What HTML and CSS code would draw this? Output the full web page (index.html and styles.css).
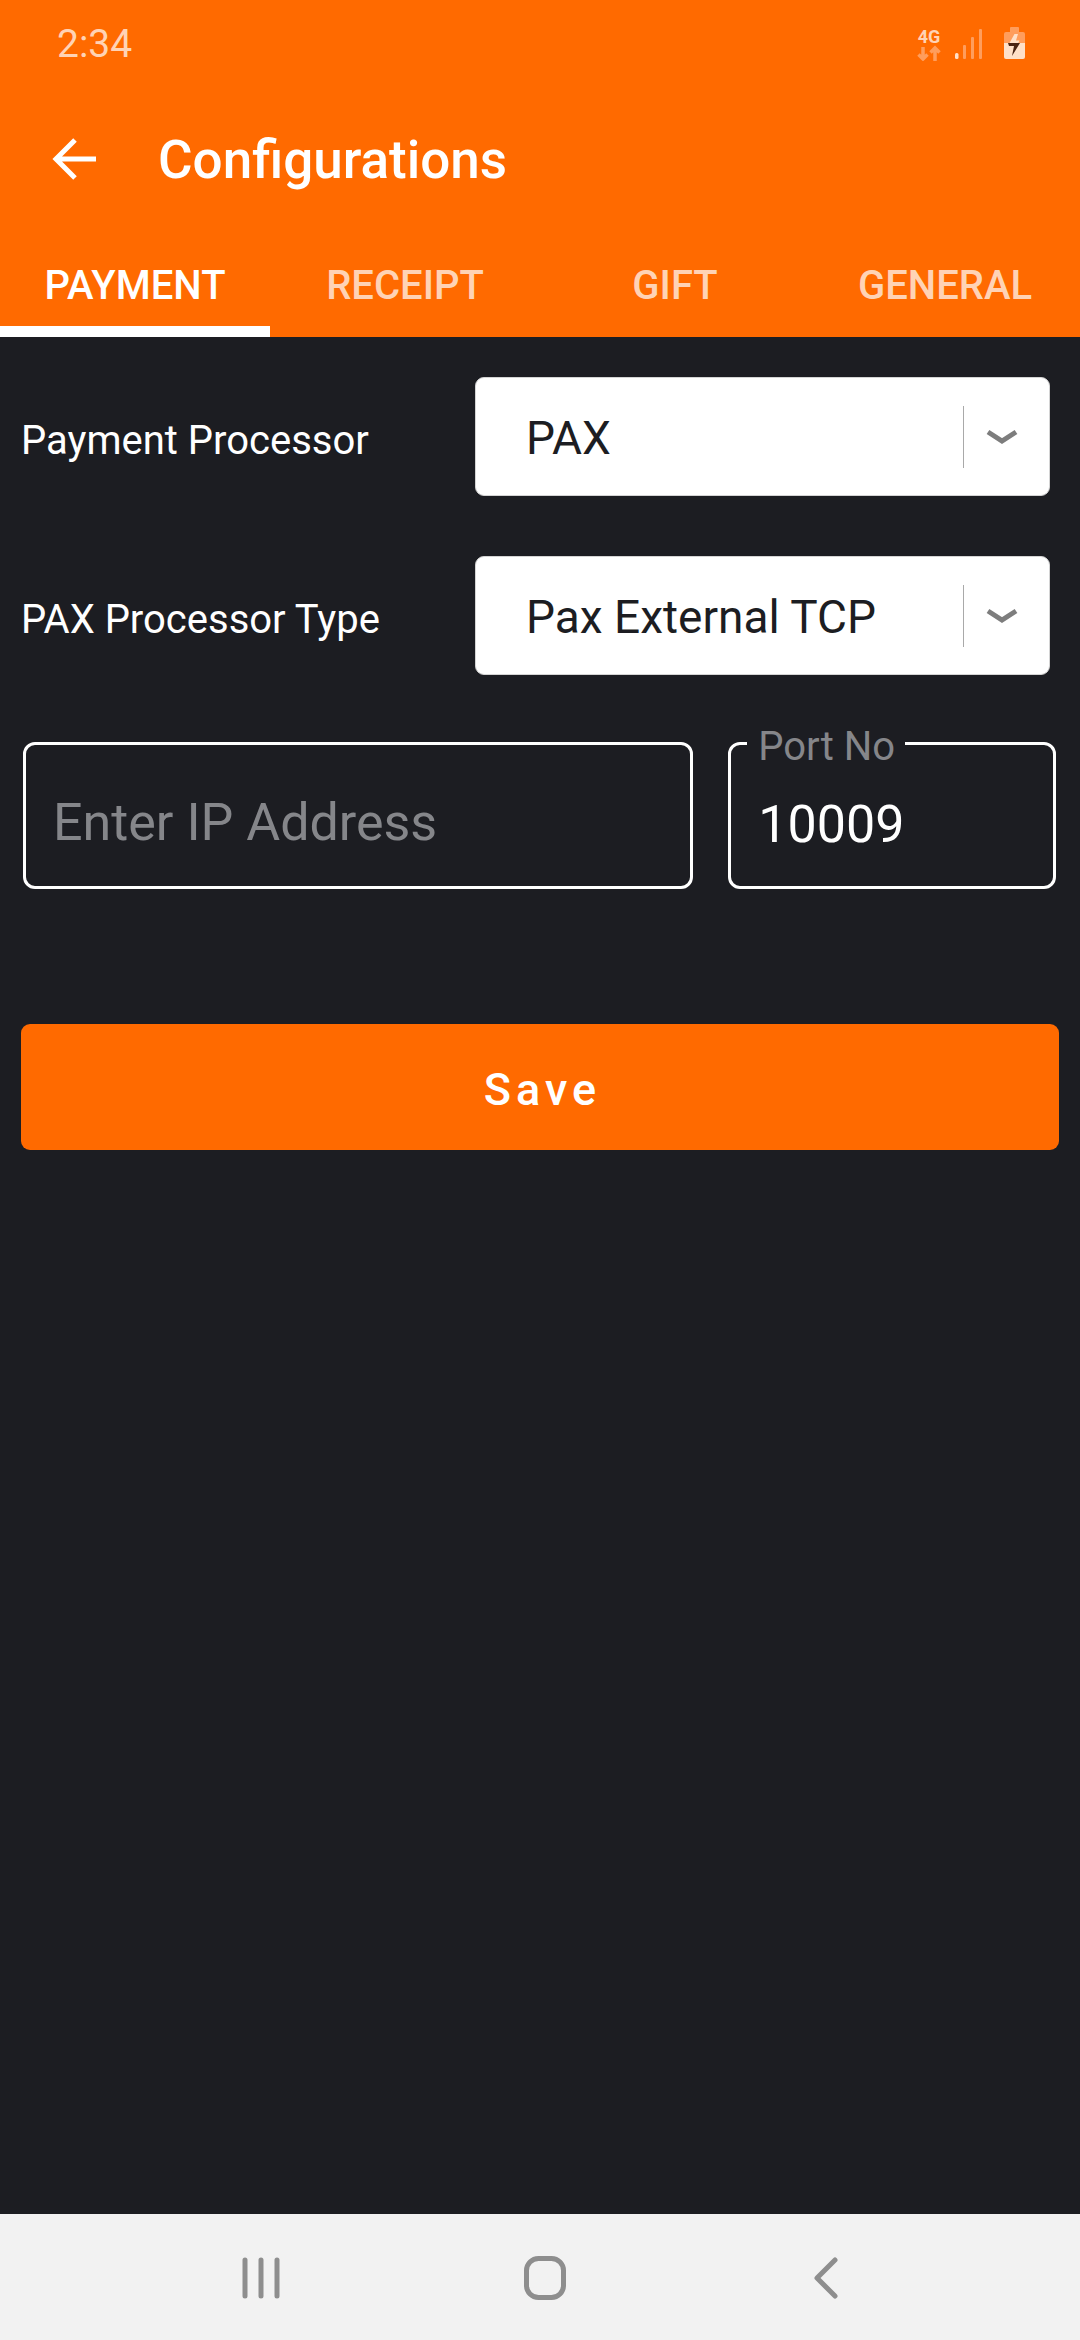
FILE: index.html
```html
<!DOCTYPE html>
<html lang="en">

<head>
  <meta charset="UTF-8" />
  <title>Configurations</title>
  <link rel="stylesheet" href="styles.css">
</head>

<body>
  <header class="app-header">
    <div class="status-bar">
      <span class="status-time">2:34</span>
      <div class="status-icons">
        <svg class="icon-network" width="24" height="34" viewBox="0 0 24 34">
          <text class="net-label" x="12" y="16" text-anchor="middle">4G</text>
          <path d="M6 20v12M1.500 27.500L6 32l4.500-4.500" class="net-arrow" />
          <path d="M18 34V21M13.500 25.500L18 21l4.500 4.500" class="net-arrow" />
        </svg>
        <svg class="icon-signal" width="27" height="34" viewBox="0 0 27 34">
          <rect x="0" y="26" width="3.500" height="6" rx="1.500" fill="#ffe0c8" />
          <rect x="8" y="18" width="3" height="14" rx="1" fill="#ff9d5c" />
          <rect x="16" y="10" width="3" height="22" rx="1" fill="#ff9d5c" />
          <rect x="24" y="2" width="3" height="30" rx="1" fill="#ff9d5c" />
        </svg>
        <svg class="icon-battery" width="21" height="34" viewBox="0 0 21 34">
          <path d="M6 1a1 1 0 0 1 1-1h7a1 1 0 0 1 1 1v4h4a2 2 0 0 1 2 2v9H0V7a2 2 0 0 1 2-2h4z" fill="#ff9d5c" />
          <path d="M0 16h21v14a2 2 0 0 1-2 2H2a2 2 0 0 1-2-2z" fill="#ffe0c8" />
          <path d="M10.500 7H14l-2 6.500h3.500L14.300 16H5.500z" fill="#ffe0c8" />
          <path d="M4 16h12L8 29l2-10H5z" fill="#4a2412" />
        </svg>
      </div>
    </div>
    <div class="toolbar">
      <svg class="back-arrow" width="46" height="44" viewBox="0 0 46 44">
        <path d="M44 22H4M23 3L4 22l19 19" />
      </svg>
      <h1 class="toolbar-title">Configurations</h1>
    </div>
    <nav class="tabs">
      <div class="tab tab-active">PAYMENT</div>
      <div class="tab">RECEIPT</div>
      <div class="tab">GIFT</div>
      <div class="tab">GENERAL</div>
    </nav>
  </header>

  <main class="content">
    <div class="form-row">
      <span class="form-label">Payment Processor</span>
      <div class="select-box">
        <span class="select-value">PAX</span>
        <div class="select-arrow">
          <svg width="32" height="18" viewBox="0 0 32 18"><path d="M2 4l14 9 14-9" /></svg>
        </div>
      </div>
    </div>
    <div class="form-row">
      <span class="form-label">PAX Processor Type</span>
      <div class="select-box">
        <span class="select-value">Pax External TCP</span>
        <div class="select-arrow">
          <svg width="32" height="18" viewBox="0 0 32 18"><path d="M2 4l14 9 14-9" /></svg>
        </div>
      </div>
    </div>

    <div class="field-row">
      <div class="text-field field-ip">
        <span class="placeholder">Enter IP Address</span>
      </div>
      <div class="text-field field-port">
        <label class="field-legend">Port No</label>
        <span class="field-value">10009</span>
      </div>
    </div>

    <button class="save-btn">Save</button>
  </main>

  <footer class="nav-bar">
    <svg width="40" height="42" viewBox="0 0 40 42" class="nav-icon">
      <path d="M4 3v36M20 3v36M36 3v36" />
    </svg>
    <svg width="42" height="44" viewBox="0 0 42 44" class="nav-icon">
      <rect x="2.500" y="2.500" width="37" height="39" rx="12" />
    </svg>
    <svg width="26" height="42" viewBox="0 0 26 42" class="nav-icon nav-back">
      <path d="M22 3L4 21l18 18" />
    </svg>
  </footer>
</body>

</html>
```
FILE: styles.css
```css
* {
  box-sizing: border-box;
}

body {
  margin: 0;
  display: flex;
  flex-direction: column;
  height: 2340px;
  font-family: Roboto, "Liberation Sans", sans-serif;
  background: #1c1d22;
  color: #fff;
}

/* orange top area */
.app-header {
  background: #ff6a00;
  height: 337px;
  display: flex;
  flex-direction: column;
}

.status-bar {
  height: 88px;
  padding: 0 55px 0 57px;
  display: flex;
  align-items: center;
  justify-content: space-between;
}

.status-time {
  font-size: 39px;
  color: #ffd3b5;
}

.status-icons {
  display: flex;
  align-items: center;
}

.icon-signal {
  margin: 0 22px 0 14px;
}

.net-label {
  font-family: Roboto, sans-serif;
  font-size: 18px;
  font-weight: 700;
  fill: #ffd3b5;
}

.net-arrow {
  fill: none;
  stroke: #ff9d5c;
  stroke-width: 3.500;
}

.toolbar {
  height: 144px;
  display: flex;
  align-items: center;
  padding-left: 52px;
  gap: 60px;
}

.back-arrow {
  margin-bottom: 3px;
}

.back-arrow path {
  fill: none;
  stroke: #fff;
  stroke-width: 5;
}

.toolbar-title {
  margin: 0;
  font-size: 53px;
  font-weight: 500;
}

.tabs {
  flex: 1;
  display: flex;
}

.tab {
  flex: 1;
  display: flex;
  align-items: center;
  justify-content: center;
  padding: 12px 0 11px;
  font-size: 40px;
  font-weight: 500;
  color: #ffd3b5;
}

.tab-active {
  color: #fff;
  border-bottom: 11px solid #fff;
  padding-bottom: 0;
}

/* form */
.content {
  flex: 1;
  padding: 40px 21px 0;
}

.form-row {
  display: flex;
  align-items: center;
  justify-content: space-between;
  margin-bottom: 60px;
  padding-right: 9px;
}

.form-label {
  font-size: 40px;
  margin-top: 8px;
}

.select-box {
  width: 575px;
  height: 119px;
  background: #fff;
  border: 1px solid #d4d4d4;
  border-radius: 9px;
  display: flex;
  align-items: center;
  justify-content: space-between;
  padding-left: 50px;
  color: #1c1d22;
}

.select-value {
  font-size: 46px;
  margin-top: 3px;
}

.select-arrow {
  height: 62px;
  width: 86px;
  padding-right: 10px;
  border-left: 1px solid #a9a9a9;
  display: flex;
  align-items: center;
  justify-content: center;
}

.select-arrow path {
  fill: none;
  stroke: #7d7d7d;
  stroke-width: 5;
}

.field-row {
  display: flex;
  gap: 35px;
  padding: 7px 3px 0 2px;
}

.text-field {
  position: relative;
  height: 147px;
  border: 3px solid #fff;
  border-radius: 12px;
  display: flex;
  align-items: center;
}

.field-ip {
  width: 671px;
  padding-left: 27px;
}

.field-port {
  width: 328px;
  padding-left: 27px;
}

.placeholder {
  font-size: 52px;
  color: #85868a;
  margin-top: 14px;
}

.field-value {
  font-size: 52px;
  margin-top: 17px;
}

.field-legend {
  position: absolute;
  left: 16px;
  top: -22px;
  padding: 0 10px 0 11px;
  background: #1c1d22;
  font-size: 40px;
  color: #85868a;
}

.save-btn {
  display: block;
  width: 100%;
  height: 126px;
  margin-top: 135px;
  padding: 4px 0 0 5px;
  border: 0;
  border-radius: 9px;
  background: #ff6a00;
  color: #fff;
  font-family: inherit;
  font-size: 45px;
  font-weight: 500;
  letter-spacing: 5px;
}

/* android nav */
.nav-bar {
  height: 126px;
  background: #f2f2f2;
  display: flex;
  align-items: center;
  gap: 243px;
  padding: 2px 0 0 241px;
}

.nav-back {
  margin-left: 4px;
}

.nav-icon path,
.nav-icon rect {
  fill: none;
  stroke: #8e8e8e;
  stroke-width: 5;
  stroke-linecap: round;
  stroke-linejoin: round;
}
```
